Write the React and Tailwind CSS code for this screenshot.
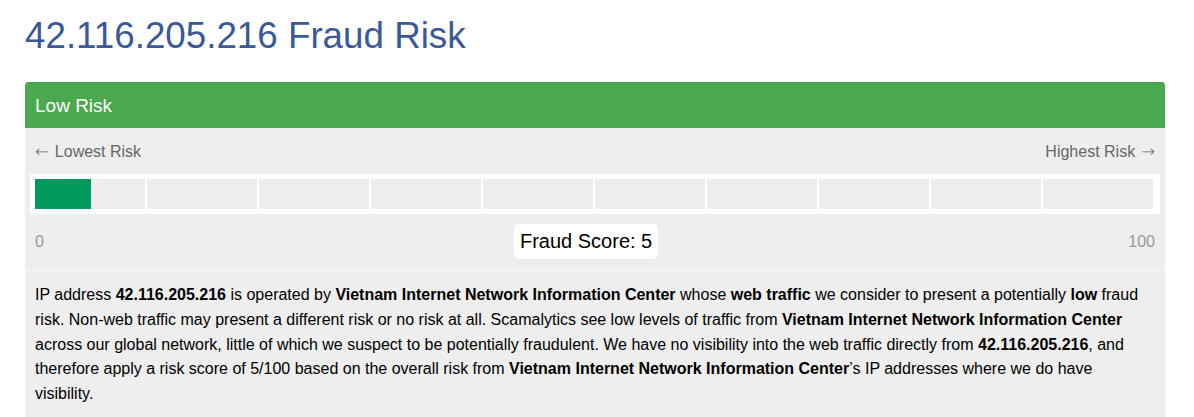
import React from "react";

const B = ({ children }) => <strong className="font-bold">{children}</strong>;

export default function App() {
  const segments = Array.from({ length: 10 });
  return (
    <div className="bg-white min-h-[417px] font-['Liberation_Sans',Arial,sans-serif] text-black">
      <div className="w-[1140px] ml-[25px] pt-[16px]">
        <h1 className="text-[36.75px] leading-[40px] font-normal text-[#3b5998] mb-[26px]">
          42.116.205.216 Fraud Risk
        </h1>
        <div className="rounded-[4px] overflow-hidden bg-[#eeeeee]">
          <div className="h-[46px] bg-[#4aa94f] border-t border-[#44a048] flex items-center px-[10px]">
            <span className="text-white text-[19px] leading-[20px]">Low Risk</span>
          </div>
          <div className="px-[5px] pt-[13px] pb-[11px]">
            <div className="flex justify-between px-[5px] text-[16px] leading-[22px] text-[#666666]">
              <span>
                <span className="font-['DejaVu_Sans',sans-serif] font-light mr-[2px]">←</span> Lowest Risk
              </span>
              <span>
                Highest Risk <span className="font-['DejaVu_Sans',sans-serif] font-light ml-[2px]">→</span>
              </span>
            </div>
            <div className="mt-[11px] bg-white p-[5px]">
              <div className="relative flex h-[30px]">
                {segments.map((_, i) => (
                  <div key={i} className="flex-1 bg-[#eeeeee] border-r-2 border-white" />
                ))}
                <div className="absolute left-0 top-0 h-[30px] bg-[#00995e]" style={{ width: "5%" }} />
              </div>
            </div>
            <div className="mt-[10px] flex justify-between items-center px-[5px]">
              <span className="text-[16px] leading-[22px] text-[#999999]">0</span>
              <span className="bg-white rounded-[5px] px-[6px] py-[6px] text-[20px] leading-[23px] text-black">
                Fraud Score: 5
              </span>
              <span className="text-[16px] leading-[22px] text-[#999999]">100</span>
            </div>
          </div>
          <div className="border-t border-[#fafafa] px-[10px] pt-[12px] pb-[20px] text-[16px] leading-[24.75px] text-black">
            IP address <B>42.116.205.216</B> is operated by <B>Vietnam Internet Network Information Center</B> whose{" "}
            <B>web traffic</B> we consider to present a potentially <B>low</B> fraud risk. Non-web traffic may present a
            different risk or no risk at all. Scamalytics see low levels of traffic from{" "}
            <B>Vietnam Internet Network Information Center</B> across our global network, little of which we suspect to be
            potentially fraudulent. We have no visibility into the web traffic directly from <B>42.116.205.216</B>, and
            therefore apply a risk score of 5/100 based on the overall risk from{" "}
            <B>Vietnam Internet Network Information Center</B>’s IP addresses where we do have visibility.
          </div>
        </div>
      </div>
    </div>
  );
}
